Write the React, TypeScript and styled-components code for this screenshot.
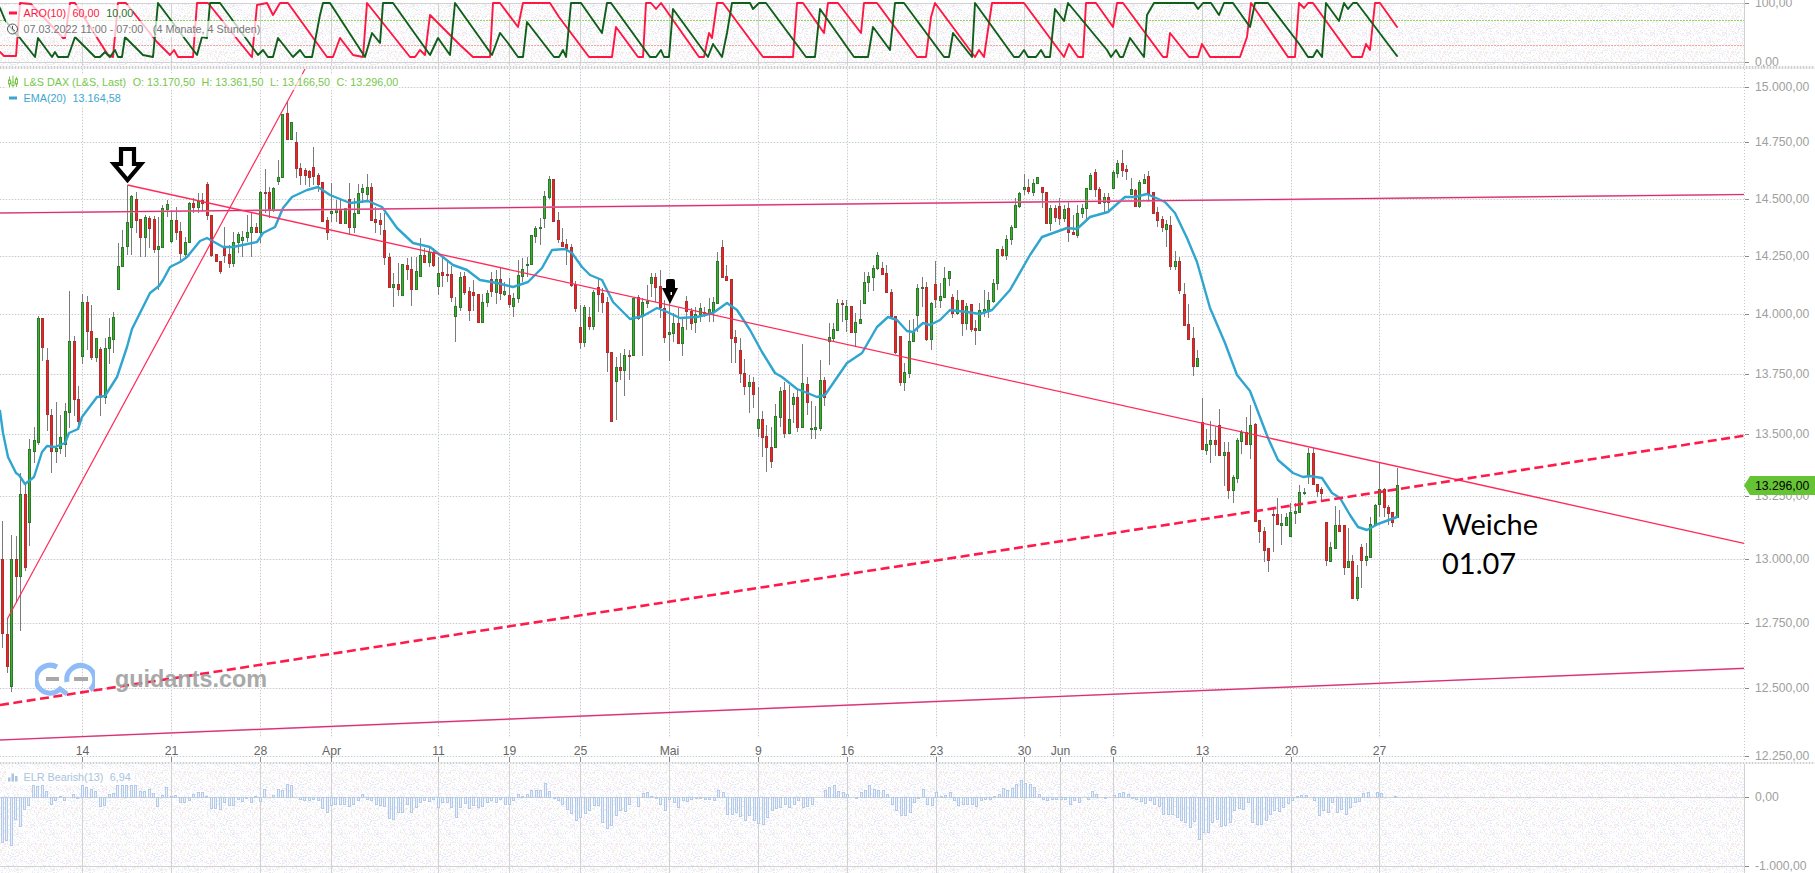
import styled, { createGlobalStyle } from 'styled-components';

const GlobalStyle = createGlobalStyle`
  html, body {
    margin: 0;
    padding: 0;
    background: #fff;
  }
`;

const Page = styled.div`
  width: 1815px;
  height: 873px;
  display: flex;
  flex-direction: column;
  overflow: hidden;
  font-family: "Liberation Sans", Arial, sans-serif;
`;

const Panel = styled.section<{ $height: number }>`
  position: relative;
  height: ${p => p.$height}px;
  flex: none;
`;

const Divider = styled.div<{ $height: number }>`
  height: ${p => p.$height}px;
  flex: none;
  background-color: #d9d9d9;
  background-image: linear-gradient(90deg, #cfcfcf 50%, #efeff2 50%);
  background-size: 3px 100%;
`;

const Chart = styled.svg`
  display: block;
  overflow: visible;
`;

const Legend = styled.div<{ $top: number }>`
  position: absolute;
  top: ${p => p.$top}px;
  left: 6px;
  font-size: 10.8px;
`;

const LegendRow = styled.div<{ $color?: string }>`
  display: flex;
  align-items: center;
  width: fit-content;
  height: 16px;
  gap: 6.5px;
  white-space: pre;
  background: rgba(255, 255, 255, 0.72);
  color: ${p => p.$color || '#777'};
`;

const LegendIcon = styled.svg`
  display: block;
  width: 14px;
  height: 14px;
  margin-right: -3px;
  flex: none;
`;

const LegendValue = styled.span<{ $color?: string }>`
  color: ${p => p.$color || 'inherit'};
`;

const Logo = styled.div`
  position: absolute;
  left: 35px;
  top: 591px;
  display: flex;
  align-items: center;
  gap: 20px;
  height: 38px;
`;

const LogoMark = styled.svg`
  display: block;
  width: 60px;
  height: 38px;
`;

const LogoText = styled.span`
  font-size: 23.4px;
  font-weight: 700;
  color: #a2a2a2;
  opacity: 0.92;
`;

const Note = styled.div`
  position: absolute;
  left: 1442px;
  top: 436px;
  font-family: Lato, "Liberation Sans", sans-serif;
  font-size: 29px;
  line-height: 38.6px;
  color: #000;
`;

const PriceTag = styled.div`
  position: absolute;
  right: 0;
  top: 407px;
  width: 60px;
  height: 19px;
  padding-left: 11px;
  background: #66c333;
  clip-path: polygon(0 50%, 6px 0, 100% 0, 100% 100%, 6px 100%);
  font-size: 12.2px;
  line-height: 20px;
  color: #000;
`;

const AxisLabel = styled.text`
  font-family: "Liberation Sans", Arial, sans-serif;
  font-size: 12.2px;
  fill: #a0a0a0;
`;

const DateLabel = styled.text`
  font-family: "Liberation Sans", Arial, sans-serif;
  font-size: 12.2px;
  fill: #666;
  text-anchor: middle;
`;

const GridSolid = styled.line`
  stroke: #d2d2d2;
  stroke-width: 1;
  shape-rendering: crispEdges;
`;

const GridWash = styled.line<{ $tint: string }>`
  stroke: ${p => p.$tint};
  stroke-width: 1;
  shape-rendering: crispEdges;
`;

const GridDots = styled.line`
  stroke: #c9c9c9;
  stroke-width: 1;
  stroke-dasharray: 1 2;
  shape-rendering: crispEdges;
`;

const Level = styled.line<{ $color: string }>`
  stroke: ${p => p.$color};
  stroke-width: 1;
  stroke-dasharray: 2 1;
  shape-rendering: crispEdges;
`;

const Tick = styled.line`
  stroke: #8a8a8a;
  stroke-width: 1;
  shape-rendering: crispEdges;
`;

const Wick = styled.line`
  stroke: #7b7b7b;
  stroke-width: 1;
  shape-rendering: crispEdges;
`;

const CandleBody = styled.rect<{ $up: boolean }>`
  fill: ${p => (p.$up ? '#3fae2c' : '#f5201f')};
  stroke: ${p => (p.$up ? '#2b7a2b' : '#a83232')};
  stroke-width: 1;
  shape-rendering: crispEdges;
`;

const SeriesLine = styled.polyline<{ $color: string; $width: number }>`
  fill: none;
  stroke: ${p => p.$color};
  stroke-width: ${p => p.$width};
  stroke-linejoin: round;
  stroke-linecap: round;
`;

const TrendLine = styled.line<{ $color: string; $width: number; $dash?: string }>`
  stroke: ${p => p.$color};
  stroke-width: ${p => p.$width};
  stroke-dasharray: ${p => p.$dash || 'none'};
`;

const ElrBar = styled.rect`
  fill: #e9f0fa;
  stroke: #b3cbe9;
  stroke-width: 1;
  shape-rendering: crispEdges;
`;

const G = 1;
const R = 0;

// x, body top, body bottom, high, low, direction (all in screen pixels)
const candles: number[][] = [
  [-2, 570, 655, 540, 655, G], [2.5, 559, 633, 521, 648, R], [7.5, 634, 666, 619, 673, R], [11.5, 559, 686, 535, 692, G],
  [16, 559, 576, 536, 603, R], [20, 494, 576, 473, 631, G], [25.5, 494, 567, 483, 571, R], [29.5, 449, 522, 439, 546, G],
  [34.5, 440, 451, 427, 463, G], [38.5, 318, 442, 316, 445, G], [42.5, 318, 347, 318, 361, R], [47.5, 360, 414, 348, 431, R],
  [51.5, 415, 451, 409, 473, R], [56.5, 448, 451, 402, 463, G], [60.5, 437, 448, 415, 454, G], [65.5, 411, 444, 403, 457, G],
  [69.5, 341, 412, 291, 428, G], [74.5, 341, 399, 336, 416, R], [78.5, 399, 421, 386, 428, R], [82.5, 302, 356, 294, 364, G],
  [87.5, 302, 331, 296, 350, R], [91.5, 331, 357, 305, 360, R], [96.5, 338, 357, 338, 362, G], [100.5, 349, 397, 347, 416, R],
  [105, 348, 397, 338, 404, G], [109, 337, 348, 318, 364, G], [113.5, 317, 339, 312, 353, G], [118, 266, 289, 243, 290, G],
  [122.5, 247, 266, 230, 267, G], [127.5, 222, 246, 185, 255, G], [131.5, 196, 227, 195, 255, G], [136, 199, 220, 192, 233, R],
  [140.5, 219, 237, 219, 257, R], [145.5, 217, 237, 215, 257, G], [149.5, 218, 228, 216, 248, R], [154, 219, 249, 216, 253, R],
  [158.5, 246, 249, 217, 290, G], [162.5, 208, 247, 205, 248, G], [167.5, 204, 209, 200, 217, G], [171.5, 220, 241, 210, 243, G],
  [176, 220, 232, 207, 240, R], [180.5, 231, 253, 222, 262, R], [185.5, 242, 254, 237, 257, G], [189.5, 203, 242, 202, 243, G],
  [193.5, 203, 207, 198, 213, R], [198.5, 201, 207, 193, 213, G], [202.5, 200, 203, 193, 212, R], [207.5, 184, 215, 182, 220, R],
  [211.5, 215, 255, 215, 257, R], [216.5, 254, 261, 254, 262, R], [220.5, 261, 271, 261, 274, R], [224.5, 247, 255, 227, 263, R],
  [229.5, 254, 263, 245, 268, R], [233.5, 242, 263, 232, 267, G], [238.5, 234, 242, 232, 253, G], [242.5, 237, 240, 231, 257, G],
  [247.5, 232, 237, 215, 242, G], [251.5, 227, 232, 213, 257, G], [256.5, 227, 232, 223, 233, R], [260.5, 192, 232, 191, 243, G],
  [265, 192, 193, 169, 213, R], [269.5, 192, 210, 187, 218, R], [273.5, 188, 210, 187, 212, G], [278, 177, 181, 160, 185, G],
  [282.5, 114, 177, 114, 177, G], [287.5, 113, 139, 102, 140, R], [291.5, 122, 139, 122, 140, G], [296, 142, 168, 132, 178, R],
  [300.5, 168, 175, 163, 185, R], [305, 170, 175, 168, 185, R], [309.5, 171, 177, 170, 187, R], [313.5, 167, 176, 147, 185, R],
  [318, 175, 184, 173, 192, R], [322.5, 182, 221, 182, 222, R], [327, 220, 232, 217, 240, R], [331.5, 211, 213, 183, 222, G],
  [336, 209, 212, 200, 222, G], [340.5, 209, 223, 200, 223, R], [345, 208, 223, 208, 224, G], [349.5, 199, 227, 183, 235, R],
  [354, 213, 227, 198, 233, G], [358.5, 193, 213, 184, 214, G], [362.5, 188, 192, 184, 203, G], [367.5, 187, 194, 174, 200, G],
  [371.5, 187, 220, 183, 221, R], [375.5, 219, 222, 207, 233, R], [380, 220, 224, 213, 235, R], [384.5, 230, 257, 213, 265, R],
  [389.5, 257, 287, 253, 288, R], [393.5, 284, 287, 273, 307, G], [398.5, 284, 289, 263, 296, R], [402.5, 264, 295, 264, 296, G],
  [407, 265, 269, 258, 280, R], [411.5, 269, 289, 257, 306, R], [416, 271, 289, 257, 289, G], [420.5, 255, 276, 238, 277, G],
  [424.5, 255, 262, 248, 263, R], [429, 252, 262, 247, 267, G], [433.5, 252, 265, 248, 267, R], [438.5, 273, 286, 257, 295, G],
  [442.5, 272, 275, 257, 287, R], [447, 274, 275, 260, 282, R], [451.5, 274, 297, 266, 302, R], [455.5, 306, 316, 297, 342, G],
  [460.5, 277, 307, 272, 311, G], [464.5, 276, 292, 272, 295, R], [469, 291, 310, 287, 321, R], [473.5, 292, 295, 280, 311, R],
  [478, 294, 322, 294, 323, R], [482, 302, 322, 294, 323, G], [487, 293, 302, 290, 307, G], [491.5, 279, 291, 272, 297, R],
  [496, 279, 292, 270, 304, G], [500.5, 279, 293, 268, 300, R], [504.5, 291, 294, 282, 296, G], [509, 295, 304, 278, 308, R],
  [513.5, 298, 306, 293, 317, G], [518, 275, 298, 260, 303, G], [522.5, 269, 276, 258, 282, G], [527, 264, 265, 257, 277, G],
  [531.5, 235, 264, 235, 265, G], [535.5, 228, 236, 226, 243, G], [540, 227, 228, 218, 245, G], [544.5, 196, 218, 191, 228, G],
  [549, 179, 197, 176, 199, G], [553.5, 179, 221, 179, 221, R], [558, 220, 239, 212, 243, R], [562, 242, 246, 228, 247, R],
  [566.5, 244, 248, 239, 265, R], [571.5, 247, 285, 244, 287, R], [575.5, 284, 308, 281, 312, R], [580, 327, 342, 305, 349, R],
  [584.5, 307, 342, 305, 347, G], [589, 317, 326, 307, 330, R], [593.5, 292, 326, 290, 330, G], [598.5, 287, 294, 278, 312, R],
  [602.5, 293, 302, 288, 313, R], [607, 302, 352, 297, 372, R], [611.5, 352, 421, 352, 422, R], [616, 367, 381, 357, 420, G],
  [620.5, 367, 370, 353, 380, R], [624.5, 355, 370, 349, 396, G], [629, 355, 356, 350, 380, R], [633.5, 298, 355, 298, 355, G],
  [638, 297, 318, 295, 320, R], [642.5, 302, 316, 298, 356, G], [647, 301, 303, 285, 308, G], [651.5, 277, 283, 273, 297, G],
  [655.5, 277, 287, 273, 302, R], [660, 286, 307, 270, 318, R], [664.5, 308, 337, 300, 343, R], [669, 332, 334, 302, 361, G],
  [673, 323, 333, 313, 342, G], [678, 323, 343, 308, 344, R], [682.5, 327, 343, 317, 356, G], [686.5, 301, 311, 296, 330, R],
  [691, 311, 323, 308, 330, R], [695.5, 314, 322, 307, 333, G], [700.5, 308, 314, 303, 322, G], [704.5, 312, 313, 307, 317, R],
  [709, 309, 313, 298, 322, G], [713, 302, 311, 297, 322, G], [717.5, 261, 303, 252, 303, G], [722, 247, 277, 240, 277, R],
  [726.5, 276, 280, 265, 281, R], [731, 279, 338, 279, 363, R], [735.5, 337, 342, 330, 363, R], [740, 350, 373, 338, 383, R],
  [744.5, 373, 386, 359, 395, R], [749, 382, 386, 375, 413, G], [753.5, 382, 394, 377, 408, R], [758, 419, 428, 387, 437, G],
  [762.5, 419, 437, 411, 457, R], [766.5, 436, 447, 425, 472, R], [771, 447, 461, 427, 468, R], [775.5, 416, 447, 404, 447, G],
  [780, 391, 417, 387, 427, G], [784.5, 390, 433, 382, 438, R], [789, 419, 433, 385, 433, G], [793, 397, 404, 393, 423, G],
  [797.5, 397, 427, 388, 432, R], [802.5, 383, 427, 344, 427, G], [807, 384, 402, 377, 415, R], [811.5, 428, 429, 401, 439, G],
  [815.5, 427, 429, 406, 439, G], [820.5, 380, 428, 360, 431, G], [824.5, 380, 397, 377, 406, R], [829, 337, 341, 323, 365, G],
  [833, 329, 338, 323, 342, G], [837.5, 303, 330, 299, 330, G], [842, 303, 304, 300, 322, R], [846.5, 306, 319, 300, 332, G],
  [851, 306, 332, 306, 333, R], [855.5, 322, 332, 313, 347, G], [860, 319, 323, 300, 323, G], [864, 282, 303, 272, 303, G],
  [868.5, 276, 282, 272, 292, G], [873, 268, 277, 265, 291, G], [877.5, 255, 268, 252, 270, G], [882, 268, 274, 262, 274, R],
  [886.5, 273, 292, 265, 293, R], [891, 292, 316, 289, 318, R], [895.5, 316, 352, 316, 354, R], [900, 336, 382, 336, 386, R],
  [904.5, 372, 382, 363, 391, G], [909, 341, 373, 320, 378, G], [913.5, 332, 341, 319, 342, G], [917.5, 288, 315, 284, 332, G],
  [922, 287, 288, 277, 307, G], [926.5, 287, 339, 282, 341, R], [931, 303, 339, 302, 350, G], [935.5, 284, 299, 261, 308, R],
  [940, 296, 300, 283, 308, G], [944.5, 278, 297, 267, 297, G], [949, 271, 278, 271, 286, G], [952.5, 297, 313, 294, 318, R],
  [957.5, 300, 313, 290, 315, G], [962.5, 300, 323, 300, 336, R], [966, 306, 323, 303, 330, G], [971, 304, 329, 304, 332, R],
  [975.5, 328, 330, 320, 345, R], [979.5, 310, 330, 303, 331, G], [984.5, 309, 311, 290, 317, G], [988.5, 300, 310, 292, 318, G],
  [993, 283, 301, 279, 303, G], [997.5, 249, 283, 249, 290, G], [1002.5, 249, 255, 246, 257, R], [1006.5, 239, 255, 235, 260, G],
  [1011, 227, 239, 225, 245, G], [1015.5, 205, 227, 198, 228, G], [1019.5, 193, 206, 192, 208, G], [1024.5, 187, 189, 174, 195, G],
  [1028.5, 187, 191, 179, 194, R], [1033.5, 183, 192, 179, 196, G], [1037, 177, 183, 177, 184, G], [1042.5, 187, 192, 187, 208, R],
  [1046.5, 192, 223, 192, 224, R], [1050.5, 208, 223, 205, 231, G], [1055.5, 208, 217, 205, 222, R], [1059.5, 206, 218, 198, 225, R],
  [1064, 209, 218, 205, 222, G], [1068.5, 208, 232, 201, 242, R], [1073, 232, 234, 215, 234, R], [1077, 213, 235, 205, 238, G],
  [1082, 208, 213, 204, 218, G], [1086.5, 188, 208, 188, 220, G], [1090.5, 175, 189, 173, 190, G], [1095, 172, 189, 169, 197, R],
  [1099.5, 189, 203, 187, 204, R], [1104, 197, 202, 193, 212, G], [1108, 197, 202, 193, 212, R], [1113.5, 172, 188, 170, 189, G],
  [1117.5, 163, 173, 160, 178, G], [1122.5, 163, 170, 150, 177, R], [1126.5, 169, 171, 165, 180, R], [1131, 189, 194, 178, 195, G],
  [1135.5, 190, 206, 189, 207, R], [1139.5, 182, 206, 180, 208, G], [1144, 179, 183, 174, 183, G], [1148.5, 176, 193, 171, 202, R],
  [1153.5, 192, 213, 192, 214, R], [1157, 212, 220, 207, 227, R], [1162, 219, 227, 216, 232, R], [1166, 224, 229, 220, 247, G],
  [1170.5, 225, 266, 216, 270, R], [1175, 261, 266, 251, 270, G], [1179.5, 261, 290, 257, 294, R], [1184, 294, 325, 283, 326, R],
  [1188.5, 324, 339, 304, 339, R], [1193.5, 338, 366, 327, 376, R], [1197.5, 358, 366, 350, 367, G], [1202, 422, 449, 398, 450, R],
  [1206.5, 444, 450, 429, 455, G], [1210.5, 440, 444, 421, 463, G], [1215, 440, 444, 427, 456, R], [1219.5, 425, 455, 409, 456, R],
  [1224, 452, 455, 442, 486, G], [1228.5, 452, 490, 442, 499, R], [1233, 477, 490, 475, 503, G], [1237, 440, 478, 438, 483, G],
  [1241.5, 432, 441, 430, 454, G], [1246, 432, 444, 417, 444, R], [1250.5, 425, 444, 405, 459, G], [1255.5, 424, 521, 423, 521, R],
  [1259.5, 520, 531, 520, 543, R], [1264, 531, 550, 527, 562, R], [1268.5, 548, 560, 548, 572, R], [1273.5, 514, 515, 507, 552, R],
  [1277.5, 514, 524, 498, 524, R], [1281.5, 523, 525, 514, 545, G], [1286.5, 517, 525, 513, 526, G], [1290.5, 512, 536, 503, 536, G],
  [1295, 511, 513, 503, 524, G], [1299.5, 492, 512, 485, 512, G], [1304, 492, 493, 488, 495, G], [1308.5, 453, 475, 448, 484, G],
  [1313, 453, 484, 448, 485, R], [1317.5, 484, 491, 484, 497, R], [1321.5, 489, 493, 487, 500, R], [1326, 522, 560, 522, 566, R],
  [1330.5, 547, 561, 542, 561, G], [1335.5, 525, 548, 506, 548, G], [1339.5, 525, 531, 510, 531, R], [1344, 525, 567, 525, 575, R],
  [1348.5, 561, 567, 528, 567, G], [1352.5, 561, 598, 555, 599, R], [1357.5, 577, 598, 565, 601, G], [1361.5, 547, 560, 544, 588, R],
  [1366, 556, 560, 543, 566, G], [1370.5, 524, 557, 517, 557, G], [1375, 505, 525, 504, 525, G], [1379.5, 489, 504, 463, 517, G],
  [1384, 489, 507, 488, 517, R], [1388.5, 507, 513, 505, 525, R], [1392.5, 512, 522, 512, 527, R], [1397.5, 485, 517, 468, 517, G],
];

const ema: number[][] = [
  [0, 411], [3, 433], [8, 457], [16, 473], [19, 475], [25, 484], [34, 477], [42, 452], [47, 446], [55, 447], [65, 443], [69, 433],
  [78, 429], [82, 417], [97, 397], [105, 396], [117, 377], [127, 347], [132, 329], [150, 293], [159, 286], [163, 280], [170, 267],
  [180, 262], [187, 257], [200, 241], [207, 238], [223, 247], [233, 247], [257, 242], [263, 233], [275, 227], [283, 208], [292, 197],
  [307, 190], [318, 187], [330, 195], [350, 203], [368, 201], [382, 207], [397, 228], [413, 243], [430, 247], [453, 265], [467, 270],
  [480, 280], [497, 283], [513, 287], [528, 282], [542, 268], [552, 250], [565, 249], [572, 253], [582, 267], [590, 275], [602, 280],
  [613, 302], [630, 319], [643, 316], [657, 308], [665, 311], [680, 318], [697, 317], [713, 313], [727, 303], [737, 310], [750, 330],
  [762, 352], [775, 373], [782, 377], [792, 385], [797, 389], [805, 392], [817, 397], [825, 395], [847, 363], [862, 353], [877, 327],
  [888, 317], [897, 320], [907, 331], [913, 332], [923, 323], [930, 325], [940, 320], [950, 310], [967, 312], [980, 314], [992, 310],
  [1010, 290], [1030, 255], [1042, 237], [1067, 228], [1077, 229], [1090, 217], [1108, 212], [1125, 197], [1135, 197], [1147, 194],
  [1165, 202], [1175, 213], [1187, 238], [1197, 262], [1210, 308], [1225, 343], [1237, 375], [1250, 391], [1268, 438], [1278, 460],
  [1293, 473], [1303, 477], [1310, 476], [1322, 478], [1332, 493], [1340, 498], [1350, 515], [1358, 527], [1367, 530], [1378, 524],
  [1397, 517],
];

const aroonUp: number[][] = [
  [0, 52], [4, 56], [16, 56], [20, 3], [31, 4], [63, 38], [65, 38], [70, 3], [75, 3], [108, 55], [113, 57], [118, 3], [126, 3],
  [153, 37], [157, 42], [170, 55], [174, 50], [178, 57], [193, 57], [197, 3], [208, 3], [250, 55], [252, 57], [257, 5], [267, 3],
  [273, 15], [280, 3], [288, 3], [327, 57], [333, 57], [340, 38], [353, 55], [363, 57], [367, 3], [410, 57], [415, 57], [420, 50],
  [425, 55], [430, 15], [460, 45], [473, 57], [490, 57], [493, 3], [500, 3], [518, 27], [523, 3], [550, 3], [559, 17], [589, 57],
  [612, 57], [616, 27], [638, 57], [643, 57], [646, 3], [651, 3], [656, 9], [661, 3], [666, 10], [699, 57], [704, 57], [709, 33],
  [712, 38], [717, 3], [723, 3], [763, 57], [793, 57], [797, 3], [803, 3], [824, 33], [828, 3], [838, 3], [861, 33], [864, 3],
  [877, 3], [917, 57], [926, 57], [931, 17], [935, 3], [975, 57], [979, 50], [984, 57], [992, 3], [1024, 3], [1064, 57], [1069, 44],
  [1078, 57], [1083, 57], [1086, 3], [1096, 3], [1113, 27], [1117, 3], [1123, 3], [1163, 57], [1167, 57], [1170, 33], [1189, 57],
  [1198, 57], [1202, 44], [1210, 57], [1240, 57], [1247, 37], [1251, 3], [1288, 57], [1295, 57], [1299, 3], [1304, 8], [1308, 3],
  [1313, 3], [1352, 57], [1362, 57], [1366, 44], [1370, 50], [1375, 3], [1380, 3], [1397, 27],
];

const aroonDown: number[][] = [
  [0, 8], [5, 20], [15, 33], [20, 38], [35, 57], [38, 38], [52, 57], [55, 52], [58, 57], [68, 57], [75, 37], [95, 57], [100, 57],
  [105, 52], [110, 57], [115, 50], [118, 57], [122, 57], [125, 37], [143, 55], [153, 57], [158, 3], [197, 55], [202, 37], [207, 38],
  [210, 3], [220, 3], [258, 55], [263, 50], [268, 57], [273, 57], [278, 38], [293, 57], [300, 50], [305, 57], [312, 57], [320, 15],
  [323, 3], [330, 3], [365, 57], [372, 33], [380, 43], [383, 3], [393, 3], [430, 55], [438, 38], [450, 55], [455, 3], [492, 55],
  [500, 33], [508, 43], [518, 57], [523, 57], [527, 22], [554, 57], [559, 57], [563, 50], [566, 57], [571, 3], [581, 3], [602, 33],
  [607, 3], [611, 3], [650, 57], [656, 57], [661, 50], [664, 57], [669, 57], [673, 9], [708, 57], [713, 44], [722, 57], [727, 33],
  [732, 3], [750, 3], [753, 9], [759, 3], [766, 3], [806, 57], [815, 57], [820, 9], [854, 57], [868, 57], [873, 27], [890, 50],
  [895, 3], [904, 3], [944, 57], [949, 57], [953, 33], [972, 57], [975, 3], [1014, 57], [1019, 57], [1024, 50], [1028, 57], [1036, 57],
  [1041, 50], [1045, 57], [1050, 57], [1055, 9], [1064, 21], [1068, 3], [1107, 50], [1111, 57], [1116, 50], [1120, 57], [1123, 57],
  [1130, 38], [1144, 57], [1147, 15], [1154, 3], [1194, 3], [1198, 9], [1203, 3], [1211, 3], [1219, 15], [1224, 3], [1233, 3], [1250, 27],
  [1255, 3], [1268, 3], [1300, 45], [1308, 57], [1313, 57], [1317, 50], [1322, 57], [1326, 3], [1339, 21], [1344, 3], [1348, 9], [1353, 3],
  [1357, 3], [1397, 56],
];

// ELR histogram, offset from the zero line, in thirds of a pixel
const elr: number[] = [
  134, 130, 143, 65, 88, 37, 25, -36, -33, -36, -18, 20, 8, -3, 10, 0, -10, 4, -36, -30, -25, -18, 28, 24, -8, -12, -36, -36, -36, -36,
  -36, -18, -18, -25, -12, 26, -5, -30, -3, -6, 16, 14, 8, -8, -14, -14, -2, 32, 32, 35, 14, 24, 24, 6, 12, 4, 16, -2, 12, -24,
  -1, -5, -24, -20, -38, -36, 0, 5, 8, 10, 5, 10, 33, 46, 24, 20, 20, 20, 28, 20, 10, -8, 5, 10, 22, 25, 28, 62, 66, 46,
  46, 20, 46, 30, 16, 8, 12, 5, 30, 15, 15, 30, 60, 30, 18, 33, 25, 30, 28, 15, 10, 15,
  6, 20, 20, 10, -8, -3, -10, -22, -22, -22, -42, -18, 3, 8, 20, 35, 48, 68, 60, 48, 40, 25, 25, 75, 92, 85, 55, 38, 42, 22,
  0, 28, -12, -15, -2, 2, 22, 40, 5, 15, 30, 8, 12, 6, 3, 3, 5, 5, 8, -20, -15, 50, 52, 45, 58, 68, 55, 70, 78, 82,
  60, 40, 33, 30, 22, 30, 22, 10, 30, 28, 20, 0, 0, -22, -30, -35, -18, -15, -8, 0, 2, -15, -22, -35, -25, -22, -20, -8, 20,
  40, 55, 55, 45, 15, 3, -25, 22, 25, -15, -3, -5, -15, 10, 25, 22, 20, 20, 28, 8, 5, 5, -3, -8, -28, -22, -28, -40, -50, -42,
  -38, -30, -10, 6, 10, 5, 5, 6, 5, 20, 10, 15, 0, 5, -18, -8, 0, 3, 0, -5, -12, -15, -10, 2, 6, 12, 18, 10, 20, 28,
  50, 50, 52, 60, 70, 75, 90, 72, 125, 105, 105, 75, 65, 88, 85, 75, 40, 32, 35, 15, 75, 80, 82, 70, 50, 40, 42, 30, 18, 8,
  -3, -7, -5, 0, 8, 55, 40, 45, 15, 45, 35, 50, 30, 15, 12, -12, -14, 0, -15, -12, 0, 0, -3,
];

const dates: [string, number][] = [
  ['14', 82.5], ['21', 171.5], ['28', 260.5], ['Apr', 331.5], ['11', 438.5], ['19', 509.5], ['25', 580.5], ['Mai', 669.5], ['9', 758.5],
  ['16', 847.5], ['23', 936.5], ['30', 1024.5], ['Jun', 1060.5], ['6', 1113.5], ['13', 1202.5], ['20', 1291.5], ['27', 1379.5],
];

const prices: [string, number][] = [
  ['15.000,00', 87.5], ['14.750,00', 142.5], ['14.500,00', 199.5], ['14.250,00', 256.5], ['14.000,00', 314.5], ['13.750,00', 374.5],
  ['13.500,00', 434.5], ['13.250,00', 496.5], ['13.000,00', 559.5], ['12.750,00', 623.5], ['12.500,00', 688.5], ['12.250,00', 756.5],
];

const tints = ['#f5eef6', '#ebf6f7', '#f0f6ed', '#eef0f9', '#f8f0ee'];

const toPoints = (pts: number[][]) => pts.map(p => p.join(',')).join(' ');

// pastel pixel speckle, the gif dithering of the indicator panes
const speckle = () => {
  const colors = ['#fae4f9', '#e0f2fa', '#fbf9d8', '#e6e6f8', '#ececec'];
  const cells: { x: number; y: number; c: string }[] = [];
  let seed = 71;
  for (let y = 0; y < 36; y++) {
    for (let x = 0; x < 36; x++) {
      seed = (seed * 1103 + 12345) % 65536;
      if (seed % 100 < 30) cells.push({ x, y, c: colors[(seed >> 4) % colors.length] });
    }
  }
  return cells;
};

const speckleCells = speckle();

const Speckle = ({ id }: { id: string }) => (
  <pattern id={id} width="36" height="36" patternUnits="userSpaceOnUse">
    <rect width="36" height="36" fill="#fefefe"/>
    {speckleCells.map((s, i) => (
      <rect key={i} x={s.x} y={s.y} width="1" height="1" fill={s.c} shapeRendering="crispEdges"/>
    ))}
  </pattern>
);

const Panes = () => (
  <>
    <Panel $height={66}>
      <Chart width="1815" height="66" viewBox="0 0 1815 66">
        <Speckle id="top-speckle"/>
        <rect x="0" y="3" width="1744" height="63" fill="url(#top-speckle)"/>
        {dates.map(([d, x]) => <GridSolid key={d} x1={x} x2={x} y1="3" y2="66"/>)}
        <GridSolid x1="0" x2="1745" y1="3.5" y2="3.5"/>
        <GridSolid x1="0" x2="1745" y1="62.5" y2="62.5"/>
        <GridSolid x1="1744.5" x2="1744.5" y1="0" y2="66"/>
        <Level $color="#93d36b" x1="0" x2="1744" y1="20.5" y2="20.5"/>
        <Level $color="#f2a79a" x1="0" x2="1744" y1="45.5" y2="45.5"/>
        <SeriesLine $color="#ff1744" $width={1.9} points={toPoints(aroonUp)}/>
        <SeriesLine $color="#0f5f1a" $width={1.9} points={toPoints(aroonDown)}/>
        <Tick x1="1745" x2="1749" y1="3.5" y2="3.5"/>
        <Tick x1="1745" x2="1749" y1="62.5" y2="62.5"/>
        <AxisLabel x="1755" y="7">100,00</AxisLabel>
        <AxisLabel x="1755" y="66">0,00</AxisLabel>
      </Chart>
      <Legend $top={5}>
        <LegendRow>
          <LegendIcon viewBox="0 0 14 14"><rect x="3" y="5.5" width="8" height="3" fill="#ff1744"/></LegendIcon>
          <LegendValue $color="#ff1744">ARO(10)</LegendValue>
          <LegendValue $color="#ff1744">60,00</LegendValue>
          <LegendValue $color="#2b6e2b">10,00</LegendValue>
        </LegendRow>
        <LegendRow>
          <LegendIcon viewBox="0 0 14 14">
            <circle cx="6.5" cy="7" r="5" fill="none" stroke="#555" strokeWidth="1"/>
            <path d="M6.5 3.8V7l2.4 1.8" fill="none" stroke="#555" strokeWidth="1"/>
          </LegendIcon>
          <LegendValue>07.03.2022 11:00 - 07:00</LegendValue>
          <LegendValue> (4 Monate, 4 Stunden)</LegendValue>
        </LegendRow>
      </Legend>
    </Panel>

    <Divider $height={3}/>

    <Panel $height={693}>
      <Chart width="1815" height="693" viewBox="0 69 1815 693">
        {prices.map(([label, y], i) => (
          <g key={label}>
            <GridWash $tint={tints[i % tints.length]} x1="0" x2="1744" y1={y} y2={y}/>
            <GridDots x1="0" x2="1744" y1={y} y2={y}/>
          </g>
        ))}
        {dates.map(([d, x], i) => (
          <g key={d}>
            <GridWash $tint={tints[(i + 2) % tints.length]} x1={x} x2={x} y1="69" y2="738"/>
            <GridDots x1={x} x2={x} y1="69" y2="738"/>
            <Tick x1={x} x2={x} y1="757" y2="762"/>
            <DateLabel x={x} y="755">{d}</DateLabel>
          </g>
        ))}
        <GridDots x1="1744.5" x2="1744.5" y1="69" y2="762"/>

        {candles.map(([x, top, bottom, high, low, dir], i) => {
          const cx = Math.round(x - 0.5) + 0.5;
          return (
            <g key={i}>
              <Wick x1={cx} x2={cx} y1={high} y2={low}/>
              <CandleBody $up={dir === G} x={cx - 1} y={top} width="2" height={Math.max(bottom - top, 1)}/>
            </g>
          );
        })}

        <SeriesLine $color="#2fa5cf" $width={2.4} points={toPoints(ema)}/>

        <TrendLine $color="#f58fb5" $width={1.7} x1="0" y1="213" x2="1744" y2="194.5"/>
        <TrendLine $color="#c9105c" $width={0.8} x1="0" y1="213" x2="1744" y2="194.5"/>
        <TrendLine $color="#f58fb5" $width={1.7} x1="0" y1="740" x2="1744" y2="668.3"/>
        <TrendLine $color="#c9105c" $width={0.8} x1="0" y1="740" x2="1744" y2="668.3"/>
        <TrendLine $color="#ff2a5a" $width={1.2} x1="7.3" y1="619" x2="305" y2="69"/>
        <TrendLine $color="#ff2a5a" $width={1.3} x1="127.5" y1="185" x2="1744" y2="543.3"/>
        <TrendLine $color="#ff1a4b" $width={2.6} $dash="9 4.5" x1="0" y1="705" x2="1744" y2="435.7"/>

        <polygon points="121,149 134,149 134,164 141,164 127.5,180 114,164 121,164" fill="none" stroke="#000" strokeWidth="4.2"/>
        <path d="M666 281q0-2 2-2h5q2 0 2 2v7h3l-8 16-8-16h4z" fill="#000"/>
        <rect x="670.5" y="292" width="1.5" height="3" fill="#fff"/>

        {prices.map(([label, y]) => (
          <g key={label}>
            <Tick x1="1745" x2="1749" y1={y} y2={y}/>
            <AxisLabel x="1755" y={y + 3.5}>{label}</AxisLabel>
          </g>
        ))}
      </Chart>

      <Legend $top={5}>
        <LegendRow $color="#76c74a">
          <LegendIcon viewBox="0 0 14 14">
            <path d="M3.5 1.5v11M7 .5v12M10.5 2v10" stroke="#76c74a" strokeWidth="1" fill="none"/>
            <rect x="2.5" y="5" width="2" height="4" fill="#fff" stroke="#76c74a"/>
            <rect x="6" y="7" width="2" height="3.5" fill="#fff" stroke="#76c74a"/>
            <rect x="9.5" y="4" width="2" height="5" fill="#fff" stroke="#76c74a"/>
          </LegendIcon>
          <LegendValue>L&amp;S DAX (L&amp;S, Last)</LegendValue>
          <LegendValue>O: 13.170,50</LegendValue>
          <LegendValue>H: 13.361,50</LegendValue>
          <LegendValue>L: 13.166,50</LegendValue>
          <LegendValue>C: 13.296,00</LegendValue>
        </LegendRow>
        <LegendRow $color="#3da6d0">
          <LegendIcon viewBox="0 0 14 14"><rect x="3" y="5.5" width="8" height="3" fill="#3da6d0"/></LegendIcon>
          <LegendValue>EMA(20)</LegendValue>
          <LegendValue>13.164,58</LegendValue>
        </LegendRow>
      </Legend>

      <Logo>
        <LogoMark viewBox="0 0 60 38">
          <path d="M22 7A14 14 0 1 0 25 29L32 34" fill="none" stroke="#8fbcf7" strokeWidth="5"/>
          <path d="M32 22A14 14 0 1 1 55 30" fill="none" stroke="#8fbcf7" strokeWidth="5"/>
          <path d="M11 19H24M39 19H53" stroke="#a8a8a8" strokeWidth="4"/>
        </LogoMark>
        <LogoText>guidants.com</LogoText>
      </Logo>

      <Note>Weiche<br/>01.07</Note>
      <PriceTag>13.296,00</PriceTag>
    </Panel>

    <Divider $height={2}/>

    <Panel $height={109}>
      <Chart width="1815" height="109" viewBox="0 764 1815 109">
        <Speckle id="bottom-speckle"/>
        <rect x="0" y="764" width="1744" height="109" fill="url(#bottom-speckle)"/>
        {dates.map(([d, x]) => <GridSolid key={d} x1={x} x2={x} y1="764" y2="873"/>)}
        <GridSolid x1="0" x2="1745" y1="797.5" y2="797.5"/>
        <GridSolid x1="0" x2="1745" y1="866.5" y2="866.5"/>
        <GridSolid x1="1744.5" x2="1744.5" y1="764" y2="873"/>
        {elr.map((v, i) => {
          const cx = Math.round(2.2 + 4.45 * i - 0.5) + 0.5;
          const h = Math.round(v / 3);
          return <ElrBar key={i} x={cx - 1} y={h < 0 ? 797.5 + h : 797.5} width="2" height={Math.abs(h)}/>;
        })}
        <Tick x1="1745" x2="1749" y1="797.5" y2="797.5"/>
        <Tick x1="1745" x2="1749" y1="866.5" y2="866.5"/>
        <AxisLabel x="1755" y="801">0,00</AxisLabel>
        <AxisLabel x="1755" y="870">-1.000,00</AxisLabel>
      </Chart>
      <Legend $top={5}>
        <LegendRow $color="#a8c4e0">
          <LegendIcon viewBox="0 0 14 14">
            <path d="M2 7.5h2.5v4H2zM5.5 3.5H8v8H5.5zM9 6h2.5v5.5H9z" fill="#a8c4e0"/>
          </LegendIcon>
          <LegendValue>ELR Bearish(13)</LegendValue>
          <LegendValue>6,94</LegendValue>
        </LegendRow>
      </Legend>
    </Panel>
  </>
);

const App = () => (
  <Page>
    <GlobalStyle/>
    <Panes/>
  </Page>
);

export default App;
